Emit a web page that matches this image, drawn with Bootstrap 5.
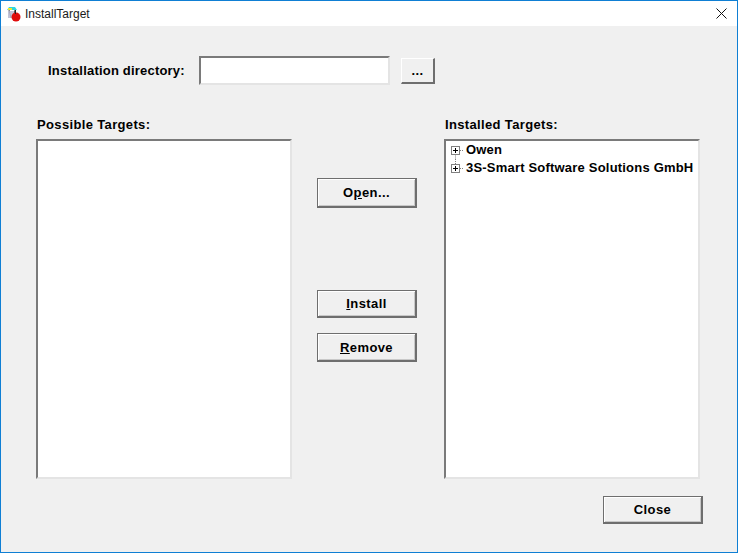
<!DOCTYPE html>
<html lang="en">
<head>
    <meta charset="UTF-8">
    <meta name="viewport" content="width=device-width, initial-scale=1.0">
    <title>InstallTarget</title>
    <link href="https://cdn.jsdelivr.net/npm/bootstrap@5.3.3/dist/css/bootstrap.min.css" rel="stylesheet">
    <style>
        html, body { height: 100%; }
        body {
            background: #f0f0f0;
            color: #000;
            font-family: "Liberation Sans", Arial, sans-serif;
            font-size: 13px;
            font-weight: 700;
            letter-spacing: .35px;
            overflow: hidden;
        }
        .app-window {
            width: 738px;
            height: 553px;
            border: 1px solid #0f7fd4;
        }
        .title-bar {
            height: 25px;
            background: #fff;
            padding-left: 5px;
            font-size: 12px;
            font-weight: 400;
            letter-spacing: 0;
            color: #1a1a1a;
        }
        .title-text { margin-left: 3px; }
        .close-x { margin-left: auto; margin-right: 10px; }
        .dlg-body { padding: 30px 35px 0 35px; }
        .dir-row { padding-left: 12px; height: 29px; }
        .dir-label { width: 151px; letter-spacing: .2px; }
        .sunken {
            background: #fff;
            border-style: solid;
            border-width: 2px;
            border-color: #7a7a7a #e4e4e4 #e4e4e4 #7a7a7a;
            border-radius: 0;
        }
        .dir-input { width: 191px; height: 29px; padding: 0 3px; }
        .win-btn {
            --bs-btn-padding-x: 0;
            --bs-btn-padding-y: 0;
            --bs-btn-font-size: 13px;
            --bs-btn-font-weight: 700;
            --bs-btn-color: #000;
            --bs-btn-bg: #f0f0f0;
            --bs-btn-border-width: 0;
            --bs-btn-border-radius: 0;
            letter-spacing: .4px;
            width: 100px;
            border-style: solid !important;
            border-width: 2px !important;
            border-color: #6e6e6e !important;
            border-top-width: 1px !important;
            border-left-width: 1px !important;
            box-shadow: inset 1px 1px 0 #fff, inset -1px -1px 0 #c8c8c8;
            line-height: 1;
        }
        .browse-btn { width: 34px; height: 26px; margin-left: 11px; border-color: #fff #6e6e6e #6e6e6e #fff !important; box-shadow: none; }
        .cols { margin-top: 30px; }
        .target-col { width: 256px; }
        .col-label { height: 24px; padding-left: 1px; }
        .target-box { height: 340px; padding: 0 3px; overflow: hidden; }
        .mid-col { width: 100px; margin: 0 27px 0 25px; padding-top: 63px; }
        .btn-open { height: 30px; }
        .btn-install { height: 28px; margin-top: 82px; }
        .btn-remove { height: 29px; margin-top: 15px; }
        .tree-row { height: 18px; white-space: nowrap; letter-spacing: .2px; }
        .tree-row svg { margin-right: 3px; flex: none; }
        .close-row { margin-top: 17px; margin-right: -1px; }
        .btn-close-dlg { height: 28px; }
    </style>
</head>
<body>
    <div class="app-window">
        <!-- title bar -->
        <div class="title-bar d-flex align-items-center">
            <svg width="16" height="16" viewBox="0 0 16 16">
                <path d="M1 4 L3 1 H9 L11 4 Z" fill="#2fd6e0"/>
                <path d="M2 2 H6 V4 H2 Z" fill="#f0e830"/>
                <path d="M3 4 L5 12 M9 4 L8 8" stroke="#444" stroke-width="1" fill="none"/>
                <rect x="2" y="5" width="6" height="7" fill="#b9b9d0" opacity=".85"/>
                <circle cx="10" cy="11" r="4.5" fill="#e00c0c"/>
                <rect x="9" y="4" width="1" height="4" fill="#222"/>
            </svg>
            <span class="title-text">InstallTarget</span>
            <svg class="close-x" width="11" height="11" viewBox="0 0 11 11">
                <path d="M.5 .5 L10.5 10.5 M10.5 .5 L.5 10.5" stroke="#111" stroke-width="1" fill="none"/>
            </svg>
        </div>

        <div class="dlg-body">
            <!-- directory -->
            <div class="dir-row d-flex align-items-center">
                <label class="dir-label" for="dirInput">Installation directory:</label>
                <input id="dirInput" type="text" class="dir-input sunken">
                <button type="button" class="btn win-btn browse-btn">...</button>
            </div>

            <div class="cols d-flex">
                <!-- possible -->
                <div class="target-col">
                    <div class="col-label">Possible Targets:</div>
                    <div class="target-box sunken"></div>
                </div>

                <!-- buttons -->
                <div class="mid-col d-flex flex-column">
                    <button type="button" class="btn win-btn btn-open">O<u>p</u>en...</button>
                    <button type="button" class="btn win-btn btn-install"><u>I</u>nstall</button>
                    <button type="button" class="btn win-btn btn-remove"><u>R</u>emove</button>
                </div>

                <!-- installed -->
                <div class="target-col">
                    <div class="col-label">Installed Targets:</div>
                    <div class="target-box sunken">
                        <div class="tree-row d-flex align-items-center">
                            <svg width="14" height="18" viewBox="3 0 14 18">
                                <path d="M9.5 13.5 V18" stroke="#808080" stroke-dasharray="1 1" fill="none"/>
                                <path d="M14 9.5 H17" stroke="#808080" stroke-dasharray="1 1" fill="none"/>
                                <rect x="5.5" y="5.5" width="8" height="8" fill="#fff" stroke="#808080"/>
                                <path d="M7 9.5 H12 M9.5 7 V12" stroke="#000" fill="none"/>
                            </svg>
                            <span>Owen</span>
                        </div>
                        <div class="tree-row d-flex align-items-center">
                            <svg width="14" height="18" viewBox="3 0 14 18">
                                <path d="M9.5 0 V5" stroke="#808080" stroke-dasharray="1 1" fill="none"/>
                                <path d="M14 9.5 H17" stroke="#808080" stroke-dasharray="1 1" fill="none"/>
                                <rect x="5.5" y="5.5" width="8" height="8" fill="#fff" stroke="#808080"/>
                                <path d="M7 9.5 H12 M9.5 7 V12" stroke="#000" fill="none"/>
                            </svg>
                            <span>3S-Smart Software Solutions GmbH</span>
                        </div>
                    </div>
                </div>
            </div>

            <div class="close-row d-flex justify-content-end">
                <button type="button" class="btn win-btn btn-close-dlg">Close</button>
            </div>
        </div>
    </div>
    <script src="https://cdn.jsdelivr.net/npm/bootstrap@5.3.3/dist/js/bootstrap.bundle.min.js"></script>
</body>
</html>
